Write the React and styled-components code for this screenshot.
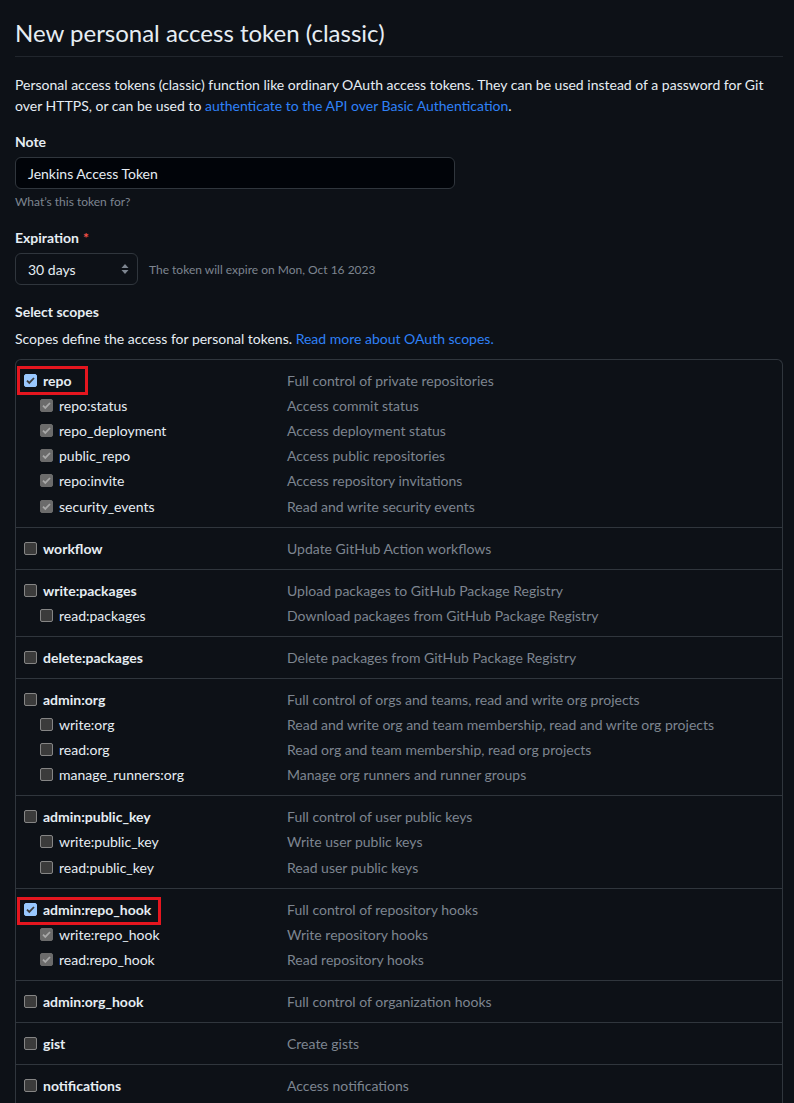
import React from "react";
import styled, { createGlobalStyle } from "styled-components";

const GlobalStyle = createGlobalStyle`
  html, body { margin: 0; padding: 0; background: #0d1117; }
  body { color: #e6edf3; font-family: Lato, "Liberation Sans", sans-serif; font-size: 14px; line-height: 21px; }
  * { box-sizing: border-box; }
`;

const Page = styled.main`
  padding: 18px 11px 0 15px;
  height: 1103px;
  overflow: hidden;
`;

const Title = styled.h1`
  margin: 0;
  font-size: 24px;
  font-weight: 400;
  line-height: 30px;
  padding-bottom: 8px;
  border-bottom: 1px solid #21262d;
`;

const Intro = styled.p`
  margin: 17px 0 0;
  line-height: 21px;
`;

const Link = styled.a`
  color: #2f81f7;
  text-decoration: none;
`;

const Field = styled.div`
  margin-top: ${(p) => p.$mt || 15}px;
`;

const Label = styled.div`
  font-weight: 700;
  line-height: 21px;
`;

const Required = styled.span`
  color: #f85149;
  margin-left: 4px;
`;

const TextInput = styled.div`
  margin-top: 5px;
  width: 440px;
  height: 32px;
  padding: 0 12px;
  display: flex;
  align-items: center;
  background: #010409;
  border: 1px solid #30363d;
  border-radius: 6px;
  color: #e6edf3;
`;

const Hint = styled.div`
  margin-top: 4px;
  font-size: 12px;
  line-height: 18px;
  color: #7d8590;
`;

const InlineRow = styled.div`
  margin-top: 5px;
  display: flex;
  align-items: center;
  gap: 11px;
`;

const Select = styled.div`
  width: 123px;
  height: 32px;
  padding: 0 8px 0 12px;
  display: flex;
  align-items: center;
  justify-content: space-between;
  border: 1px solid #30363d;
  border-radius: 6px;
  background: #0d1117;
`;

const Note = styled.span`
  font-size: 12px;
  color: #7d8590;
`;

const Sub = styled.p`
  margin: 6px 0 0;
`;

const ScopeBox = styled.div`
  margin-top: 10px;
  border: 1px solid #30363d;
  border-bottom: none;
  border-radius: 6px 6px 0 0;
`;

const Group = styled.div`
  padding: 8px 0 8px 8px;
  border-bottom: 1px solid #30363d;
`;

const Row = styled.div`
  position: relative;
  display: grid;
  grid-template-columns: 263px 1fr;
  align-items: center;
  height: 25.1px;
`;

const Name = styled.label`
  display: flex;
  align-items: center;
  padding-left: ${(p) => (p.$child ? 16 : 0)}px;
  font-weight: ${(p) => (p.$child ? 400 : 700)};
  color: #e6edf3;
`;

const Box = styled.span`
  width: 13px;
  height: 13px;
  margin-right: 6px;
  flex: none;
  border-radius: 2px;
  display: inline-flex;
  align-items: center;
  justify-content: center;
  background: ${(p) => (p.$state === "on" ? "#99c8ff" : p.$state === "dis" ? "#6b6b6b" : "#3b3b3b")};
  border: 1px solid ${(p) => (p.$state === "on" ? "#99c8ff" : p.$state === "dis" ? "#6b6b6b" : "#858585")};
`;

const Desc = styled.span`
  color: #7d8590;
`;

const Highlight = styled.span`
  position: absolute;
  left: -7px;
  top: ${(p) => p.$top}px;
  width: ${(p) => p.$w}px;
  height: ${(p) => p.$h}px;
  border: 3px solid #e5161f;
  pointer-events: none;
`;

function Arrows() {
  return (
    <svg width="8" height="12" viewBox="0 0 8 12">
      <path d="M4 1 L7.5 5 H0.5 Z" fill="#7d8590" />
      <path d="M4 11 L7.5 7 H0.5 Z" fill="#7d8590" />
    </svg>
  );
}

function Check({ state }) {
  return (
    <Box $state={state}>
      {state !== "off" && (
        <svg width="11" height="11" viewBox="0 0 11 11">
          <path
            d="M2 5.6 L4.3 7.9 L9 3"
            fill="none"
            stroke={state === "on" ? "#3b3b3b" : "#a8a8a8"}
            strokeWidth="1.8"
          />
        </svg>
      )}
    </Box>
  );
}

const groups = [
  {
    name: "repo", desc: "Full control of private repositories", on: true, hl: { top: -2, w: 71, h: 29 },
    children: [
      ["repo:status", "Access commit status"],
      ["repo_deployment", "Access deployment status"],
      ["public_repo", "Access public repositories"],
      ["repo:invite", "Access repository invitations"],
      ["security_events", "Read and write security events"],
    ],
  },
  { name: "workflow", desc: "Update GitHub Action workflows" },
  {
    name: "write:packages", desc: "Upload packages to GitHub Package Registry",
    children: [["read:packages", "Download packages from GitHub Package Registry"]],
  },
  { name: "delete:packages", desc: "Delete packages from GitHub Package Registry" },
  {
    name: "admin:org", desc: "Full control of orgs and teams, read and write org projects",
    children: [
      ["write:org", "Read and write org and team membership, read and write org projects"],
      ["read:org", "Read org and team membership, read org projects"],
      ["manage_runners:org", "Manage org runners and runner groups"],
    ],
  },
  {
    name: "admin:public_key", desc: "Full control of user public keys",
    children: [
      ["write:public_key", "Write user public keys"],
      ["read:public_key", "Read user public keys"],
    ],
  },
  {
    name: "admin:repo_hook", desc: "Full control of repository hooks", on: true, hl: { top: 0, w: 144, h: 28 },
    children: [
      ["write:repo_hook", "Write repository hooks"],
      ["read:repo_hook", "Read repository hooks"],
    ],
  },
  { name: "admin:org_hook", desc: "Full control of organization hooks" },
  { name: "gist", desc: "Create gists" },
  { name: "notifications", desc: "Access notifications" },
];

export default function App() {
  return (
    <>
      <GlobalStyle />
      <Page>
        <Title>New personal access token (classic)</Title>
        <Intro>
          Personal access tokens (classic) function like ordinary OAuth access tokens. They can be used instead of a
          password for Git over HTTPS, or can be used to{" "}
          <Link href="#">authenticate to the API over Basic Authentication</Link>.
        </Intro>

        <Field>
          <Label>Note</Label>
          <TextInput>Jenkins Access Token</TextInput>
          <Hint>What’s this token for?</Hint>
        </Field>

        <Field $mt={16}>
          <Label>
            Expiration<Required>*</Required>
          </Label>
          <InlineRow>
            <Select>
              <span>30 days</span>
              <Arrows />
            </Select>
            <Note>The token will expire on Mon, Oct 16 2023</Note>
          </InlineRow>
        </Field>

        <Field $mt={16}>
          <Label>Select scopes</Label>
          <Sub>
            Scopes define the access for personal tokens. <Link href="#">Read more about OAuth scopes.</Link>
          </Sub>
        </Field>

        <ScopeBox>
          {groups.map((g) => (
            <Group key={g.name}>
              <Row>
                {g.hl && <Highlight $top={g.hl.top} $w={g.hl.w} $h={g.hl.h} />}
                <Name>
                  <Check state={g.on ? "on" : "off"} />
                  {g.name}
                </Name>
                <Desc>{g.desc}</Desc>
              </Row>
              {(g.children || []).map(([n, d]) => (
                <Row key={n}>
                  <Name $child>
                    <Check state={g.on ? "dis" : "off"} />
                    {n}
                  </Name>
                  <Desc>{d}</Desc>
                </Row>
              ))}
            </Group>
          ))}
        </ScopeBox>
      </Page>
    </>
  );
}
